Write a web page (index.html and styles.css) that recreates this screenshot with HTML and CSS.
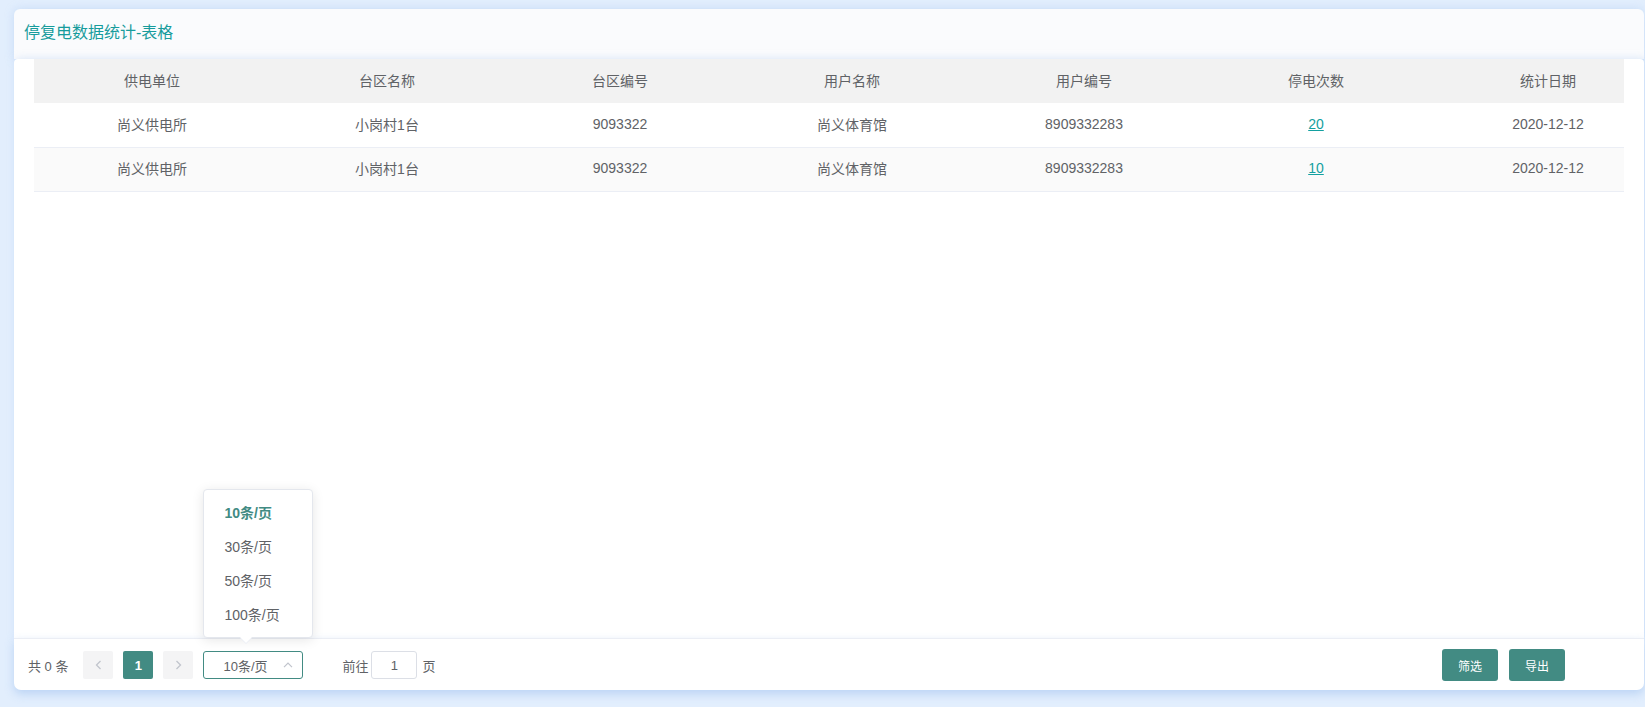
FILE: index.html
```html
<!DOCTYPE html>
<html lang="zh">
<head>
<meta charset="utf-8">
<title>停复电数据统计-表格</title>
<link rel="stylesheet" href="styles.css">
</head>
<body>
<div class="page">
  <div class="head-card">
    <h1 class="title">停复电数据统计-表格</h1>
  </div>
  <div class="body-card">
    <div class="table-wrap">
      <table class="data-table">
        <colgroup>
          <col class="c1"><col class="c2"><col class="c3"><col class="c4"><col class="c5"><col class="c6"><col class="c7">
        </colgroup>
        <thead>
          <tr><th>供电单位</th><th>台区名称</th><th>台区编号</th><th>用户名称</th><th>用户编号</th><th>停电次数</th><th>统计日期</th></tr>
        </thead>
        <tbody>
          <tr><td>尚义供电所</td><td>小岗村1台</td><td>9093322</td><td>尚义体育馆</td><td>8909332283</td><td><a class="link" href="#">20</a></td><td>2020-12-12</td></tr>
          <tr class="striped"><td>尚义供电所</td><td>小岗村1台</td><td>9093322</td><td>尚义体育馆</td><td>8909332283</td><td><a class="link" href="#">10</a></td><td>2020-12-12</td></tr>
        </tbody>
      </table>
    </div>
  </div>
  <div class="footer">
    <div class="pager">
      <span class="total">共 0 条</span>
      <button class="pg-btn pg-nav" type="button">
        <svg width="7" height="10" viewBox="0 0 7 10"><path d="M5.5 1 L1.5 5 L5.5 9" fill="none" stroke="#c0c4cc" stroke-width="1.3"/></svg>
      </button>
      <button class="pg-btn pg-active" type="button">1</button>
      <button class="pg-btn pg-nav" type="button">
        <svg width="7" height="10" viewBox="0 0 7 10"><path d="M1.5 1 L5.5 5 L1.5 9" fill="none" stroke="#c0c4cc" stroke-width="1.3"/></svg>
      </button>
      <div class="size-select">
        <span class="size-value">10条/页</span>
        <svg class="size-arrow" width="10" height="6" viewBox="0 0 10 6"><path d="M1 5.2 L5 1.2 L9 5.2" fill="none" stroke="#c0c4cc" stroke-width="1.2"/></svg>
        <div class="dropdown">
          <ul class="dd-list">
            <li class="dd-item selected">10条/页</li>
            <li class="dd-item">30条/页</li>
            <li class="dd-item">50条/页</li>
            <li class="dd-item">100条/页</li>
          </ul>
          <span class="dd-arrow"></span>
        </div>
      </div>
      <span class="jump">前往</span>
      <span class="jump-input">1</span>
      <span class="jump-unit">页</span>
    </div>
    <div class="actions">
      <button class="btn" type="button">筛选</button>
      <button class="btn" type="button">导出</button>
    </div>
  </div>
</div>
</body>
</html>
```

FILE: styles.css
```css
* { box-sizing: border-box; }
html, body { margin: 0; padding: 0; }
body {
  width: 1645px;
  height: 707px;
  overflow: hidden;
  background: #e2eefd;
  font-family: "Liberation Sans", "Noto Sans CJK SC", sans-serif;
  color: #606266;
}
.page {
  padding: 9px 1px 0 14px;
}
.head-card {
  height: 50px;
  background: #fafbfd;
  border-radius: 6px 6px 0 0;
  display: flex;
  align-items: center;
  padding-left: 10px;
  box-shadow: 0 0 10px rgba(150, 185, 235, 0.35);
}
.title {
  margin: 0;
  font-size: 16px;
  font-weight: normal;
  color: #179c9c;
  line-height: 20px;
  padding-bottom: 2px;
}
.body-card {
  height: 579px;
  background: #fff;
  border-radius: 4px 4px 0 0;
  padding: 0 20px;
  box-shadow: 2px 0 8px rgba(150, 185, 235, 0.35);
}
.table-wrap {
  width: 1590px;
  overflow: hidden;
}
.data-table {
  width: 1630px;
  table-layout: fixed;
  border-collapse: collapse;
  font-size: 14px;
}
.c1 { width: 236px; }
.c2 { width: 234px; }
.c3, .c4, .c5, .c6, .c7 { width: 232px; }
.data-table th {
  height: 44px;
  background: #f2f2f2;
  font-weight: normal;
  color: #606266;
  text-align: center;
  padding: 0 10px 2px;
}
.data-table td {
  height: 44px;
  text-align: center;
  padding: 0 10px 2px;
  border-bottom: 1px solid #ebeef5;
  color: #606266;
}
.data-table tr.striped td { background: #fafafa; }
.link { color: #13a0a0; text-decoration: underline; }
.footer {
  height: 52px;
  background: #fff;
  border-top: 1px solid #ebeef5;
  border-radius: 0 0 7px 7px;
  display: flex;
  align-items: center;
  justify-content: space-between;
  padding: 0 79px 0 14px;
  box-shadow: 0 4px 10px rgba(140, 180, 235, 0.45);
}
.pager {
  display: flex;
  align-items: center;
  font-size: 13px;
  color: #606266;
  padding-top: 1px;
}
.total { margin-right: 15px; }
.pg-btn {
  width: 30px;
  height: 28px;
  border: none;
  border-radius: 2px;
  margin-right: 10px;
  padding: 0;
  display: flex;
  align-items: center;
  justify-content: center;
  font-family: inherit;
  font-size: 13px;
  font-weight: bold;
}
.pg-nav { background: #f4f4f5; }
.pg-active { background: #428b83; color: #fff; }
.size-select {
  position: relative;
  width: 100px;
  height: 28px;
  border: 1px solid #428b83;
  border-radius: 3px;
  display: flex;
  align-items: center;
  padding-left: 19px;
  margin-right: 39px;
}
.size-value { color: #606266; }
.size-arrow { position: absolute; right: 9px; top: 10px; }
.dropdown {
  position: absolute;
  left: -1px;
  bottom: calc(100% + 14px);
  width: 110px;
  background: #fff;
  border: 1px solid #e4e7ed;
  border-radius: 4px;
  box-shadow: 0 2px 12px rgba(0, 0, 0, 0.1);
}
.dd-list { list-style: none; margin: 0; padding: 6px 0 5px; }
.dd-item {
  height: 34px;
  line-height: 34px;
  padding-left: 20px;
  font-size: 14px;
  color: #606266;
  white-space: nowrap;
}
.dd-item.selected { color: #428b83; font-weight: bold; }
.dd-arrow {
  position: absolute;
  left: 36px;
  bottom: -6px;
  width: 0;
  height: 0;
  border-left: 6px solid transparent;
  border-right: 6px solid transparent;
  border-top: 6px solid #fff;
  filter: drop-shadow(0 1px 0 #ebeef5);
}
.jump { margin-right: 3px; }
.jump-input {
  width: 46px;
  height: 28px;
  border: 1px solid #dcdfe6;
  border-radius: 3px;
  display: flex;
  align-items: center;
  justify-content: center;
  margin-right: 5px;
  color: #606266;
}
.actions { display: flex; gap: 11px; padding-top: 1px; }
.btn {
  width: 56px;
  height: 32px;
  border: none;
  border-radius: 3px;
  background: #428b83;
  color: #fff;
  font-family: inherit;
  font-size: 12px;
  padding: 0;
}
```
